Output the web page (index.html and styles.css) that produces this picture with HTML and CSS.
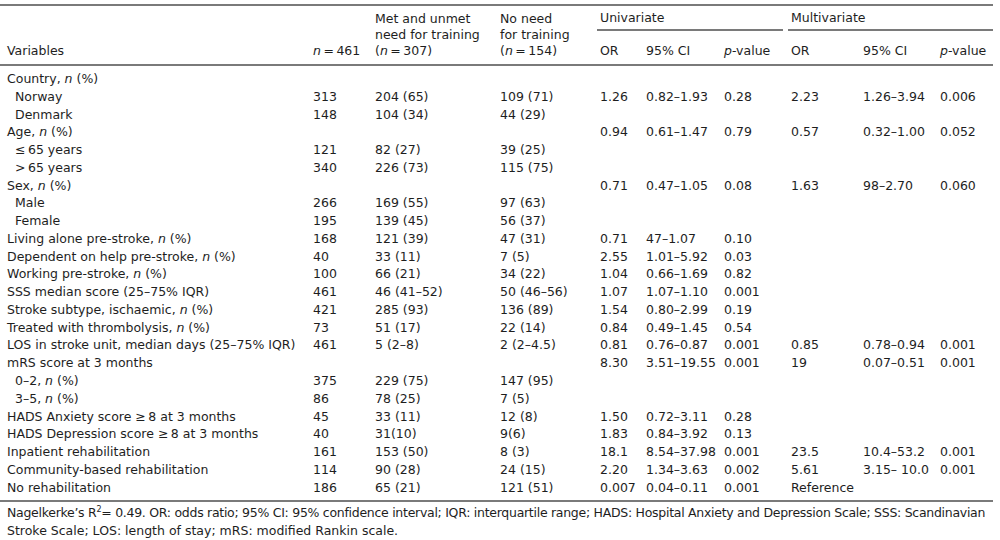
FILE: index.html
```html
<!DOCTYPE html>
<html>
<head>
<meta charset="utf-8">
<link rel="stylesheet" href="styles.css">
</head>
<body>
<div class="page">
<table class="tbl">
<colgroup>
<col class="c-var"><col class="c-n"><col class="c-met"><col class="c-no">
<col class="c-or"><col class="c-ci"><col class="c-p">
<col class="c-mor"><col class="c-mci"><col class="c-mp">
</colgroup>
<thead>
<tr class="h1">
<th rowspan="2" class="first bottom">Variables</th>
<th rowspan="2" class="bottom"><i>n</i>&thinsp;=&thinsp;461</th>
<th rowspan="2" class="bottom">Met and unmet<br>need for training<br>(<i>n</i>&thinsp;=&thinsp;307)</th>
<th rowspan="2" class="bottom">No need<br>for training<br>(<i>n</i>&thinsp;=&thinsp;154)</th>
<th colspan="3" class="group uni"><div class="grp">Univariate</div></th>
<th colspan="3" class="group multi"><div class="grp">Multivariate</div></th>
</tr>
<tr class="h2">
<th>OR</th><th>95% CI</th><th><i>p</i>-value</th>
<th>OR</th><th>95% CI</th><th><i>p</i>-value</th>
</tr>
</thead>
<tbody>
<tr class="top"><td class="first">Country, <i>n</i> (%)</td><td></td><td></td><td></td><td></td><td></td><td></td><td></td><td></td><td></td></tr>
<tr><td class="first sub">Norway</td><td>313</td><td>204 (65)</td><td>109 (71)</td><td>1.26</td><td>0.82–1.93</td><td>0.28</td><td>2.23</td><td>1.26–3.94</td><td>0.006</td></tr>
<tr><td class="first sub">Denmark</td><td>148</td><td>104 (34)</td><td>44 (29)</td><td></td><td></td><td></td><td></td><td></td><td></td></tr>
<tr><td class="first">Age, <i>n</i> (%)</td><td></td><td></td><td></td><td>0.94</td><td>0.61–1.47</td><td>0.79</td><td>0.57</td><td>0.32–1.00</td><td>0.052</td></tr>
<tr><td class="first sub">≤&thinsp;65 years</td><td>121</td><td>82 (27)</td><td>39 (25)</td><td></td><td></td><td></td><td></td><td></td><td></td></tr>
<tr><td class="first sub">&gt;&thinsp;65 years</td><td>340</td><td>226 (73)</td><td>115 (75)</td><td></td><td></td><td></td><td></td><td></td><td></td></tr>
<tr><td class="first">Sex, <i>n</i> (%)</td><td></td><td></td><td></td><td>0.71</td><td>0.47–1.05</td><td>0.08</td><td>1.63</td><td>98–2.70</td><td>0.060</td></tr>
<tr><td class="first sub">Male</td><td>266</td><td>169 (55)</td><td>97 (63)</td><td></td><td></td><td></td><td></td><td></td><td></td></tr>
<tr><td class="first sub">Female</td><td>195</td><td>139 (45)</td><td>56 (37)</td><td></td><td></td><td></td><td></td><td></td><td></td></tr>
<tr><td class="first">Living alone pre-stroke, <i>n</i> (%)</td><td>168</td><td>121 (39)</td><td>47 (31)</td><td>0.71</td><td>47–1.07</td><td>0.10</td><td></td><td></td><td></td></tr>
<tr><td class="first">Dependent on help pre-stroke, <i>n</i> (%)</td><td>40</td><td>33 (11)</td><td>7 (5)</td><td>2.55</td><td>1.01–5.92</td><td>0.03</td><td></td><td></td><td></td></tr>
<tr><td class="first">Working pre-stroke, <i>n</i> (%)</td><td>100</td><td>66 (21)</td><td>34 (22)</td><td>1.04</td><td>0.66–1.69</td><td>0.82</td><td></td><td></td><td></td></tr>
<tr><td class="first">SSS median score (25–75% IQR)</td><td>461</td><td>46 (41–52)</td><td>50 (46–56)</td><td>1.07</td><td>1.07–1.10</td><td>0.001</td><td></td><td></td><td></td></tr>
<tr><td class="first">Stroke subtype, ischaemic, <i>n</i> (%)</td><td>421</td><td>285 (93)</td><td>136 (89)</td><td>1.54</td><td>0.80–2.99</td><td>0.19</td><td></td><td></td><td></td></tr>
<tr><td class="first">Treated with thrombolysis, <i>n</i> (%)</td><td>73</td><td>51 (17)</td><td>22 (14)</td><td>0.84</td><td>0.49–1.45</td><td>0.54</td><td></td><td></td><td></td></tr>
<tr><td class="first">LOS in stroke unit, median days (25–75% IQR)</td><td>461</td><td>5 (2–8)</td><td>2 (2–4.5)</td><td>0.81</td><td>0.76–0.87</td><td>0.001</td><td>0.85</td><td>0.78–0.94</td><td>0.001</td></tr>
<tr><td class="first">mRS score at 3 months</td><td></td><td></td><td></td><td>8.30</td><td>3.51–19.55</td><td>0.001</td><td>19</td><td>0.07–0.51</td><td>0.001</td></tr>
<tr><td class="first sub">0–2, <i>n</i> (%)</td><td>375</td><td>229 (75)</td><td>147 (95)</td><td></td><td></td><td></td><td></td><td></td><td></td></tr>
<tr><td class="first sub">3–5, <i>n</i> (%)</td><td>86</td><td>78 (25)</td><td>7 (5)</td><td></td><td></td><td></td><td></td><td></td><td></td></tr>
<tr><td class="first">HADS Anxiety score ≥&thinsp;8 at 3 months</td><td>45</td><td>33 (11)</td><td>12 (8)</td><td>1.50</td><td>0.72–3.11</td><td>0.28</td><td></td><td></td><td></td></tr>
<tr><td class="first">HADS Depression score ≥&thinsp;8 at 3 months</td><td>40</td><td>31(10)</td><td>9(6)</td><td>1.83</td><td>0.84–3.92</td><td>0.13</td><td></td><td></td><td></td></tr>
<tr><td class="first">Inpatient rehabilitation</td><td>161</td><td>153 (50)</td><td>8 (3)</td><td>18.1</td><td>8.54–37.98</td><td>0.001</td><td>23.5</td><td>10.4–53.2</td><td>0.001</td></tr>
<tr><td class="first">Community-based rehabilitation</td><td>114</td><td>90 (28)</td><td>24 (15)</td><td>2.20</td><td>1.34–3.63</td><td>0.002</td><td>5.61</td><td>3.15– 10.0</td><td>0.001</td></tr>
<tr class="last"><td class="first">No rehabilitation</td><td>186</td><td>65 (21)</td><td>121 (51)</td><td>0.007</td><td>0.04–0.11</td><td>0.001</td><td>Reference</td><td></td><td></td></tr>
</tbody>
</table>
<p class="note"><span class="l1">Nagelkerke’s R<sup>2</sup>= 0.49. OR: odds ratio; 95% CI: 95% confidence interval; IQR: interquartile range; HADS: Hospital Anxiety and Depression Scale; SSS: Scandinavian</span><br>Stroke Scale; LOS: length of stay; mRS: modified Rankin scale.</p>
</div>
</body>
</html>
```
FILE: styles.css
```css
html, body {
  margin: 0;
  padding: 0;
  background: #fff;
}
.page {
  padding-top: 4px;
  width: 993px;
  font-family: "DejaVu Sans", Verdana, sans-serif;
  font-size: 12.5px;
  color: #1e1e1e;
}
.tbl {
  width: 993px;
  border-collapse: collapse;
  table-layout: fixed;
  border-top: 2px solid #7a7a7a;
  border-bottom: 2px solid #7a7a7a;
}
.c-var { width: 310px; }
.c-n { width: 62px; }
.c-met { width: 125px; }
.c-no { width: 100px; }
.c-or { width: 46px; }
.c-ci { width: 78px; }
.c-p { width: 67px; }
.c-mor { width: 72px; }
.c-mci { width: 77px; }
.c-mp { width: 56px; }
th, td {
  text-align: left;
  font-weight: normal;
  padding: 0 0 0 3px;
  white-space: nowrap;
  vertical-align: bottom;
}
th {
  line-height: 16px;
}
th.first, td.first {
  padding-left: 7px;
}
td.sub {
  padding-left: 15px;
}
.h1 th.bottom {
  padding-bottom: 5px;
  border-bottom: 2px solid #7a7a7a;
}
.h1 th.group {
  padding: 4px 0 0 0;
}
.h1 th.uni {
  padding-right: 5px;
}
.grp {
  padding: 0 0 3px 3px;
  border-bottom: 2px solid #7a7a7a;
}
.h2 th {
  padding-top: 12px;
  padding-bottom: 5px;
  border-bottom: 2px solid #7a7a7a;
}
td {
  line-height: 17.77px;
}
tr.top td {
  padding-top: 4px;
}
tr.last td {
  padding-bottom: 4px;
}
.note {
  margin: 2px 0 0 0;
  padding-left: 7px;
  line-height: 18px;
  font-size: 12.5px;
  white-space: nowrap;
}
.note sup {
  font-size: 8px;
  line-height: 0;
  vertical-align: baseline;
  position: relative;
  top: -5px;
}
.l1 {
  letter-spacing: -0.28px;
}
```
